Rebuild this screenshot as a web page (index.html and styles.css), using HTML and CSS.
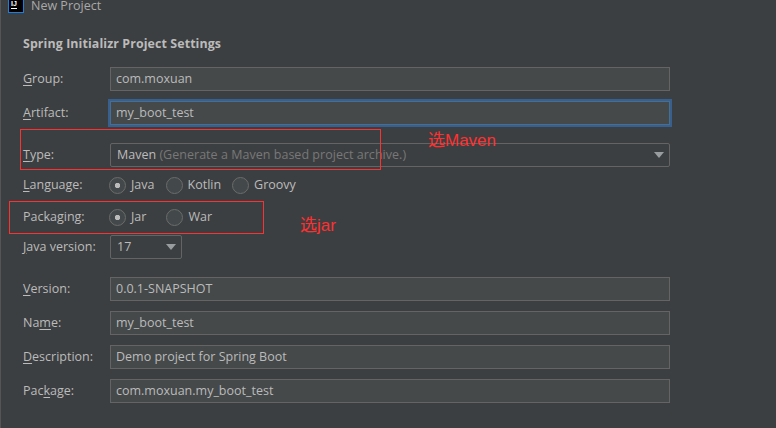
FILE: index.html
```html
<!DOCTYPE html>
<html lang="en">
<head>
<meta charset="utf-8">
<title>New Project</title>
<link rel="stylesheet" href="styles.css">
</head>
<body>
<div class="window">
  <header class="titlebar">
    <span class="logo"><span class="logo-text">IJ</span><span class="logo-bar"></span></span>
    <span class="title">New Project</span>
  </header>
  <h1 class="heading">Spring Initializr Project Settings</h1>
  <form class="form">
    <div class="row"><span class="label"><u>G</u>roup:</span><div class="field">com.moxuan</div></div>
    <div class="row"><span class="label"><u>A</u>rtifact:</span><div class="field focused">my_boot_test</div></div>
    <div class="row row-gap"><span class="label"><u>T</u>ype:</span>
      <div class="field select"><span class="select-text">Maven <span class="hint">(Generate a Maven based project archive.)</span></span><span class="arrow"></span></div>
    </div>
    <div class="row radio-row"><span class="label"><u>L</u>anguage:</span>
      <div class="radios">
        <span class="radio checked lang1">Java</span>
        <span class="radio lang2">Kotlin</span>
        <span class="radio">Groovy</span>
      </div>
    </div>
    <div class="row radio-row pack-row"><span class="label">Packa<u>g</u>ing:</span>
      <div class="radios">
        <span class="radio checked pack1">Jar</span>
        <span class="radio">War</span>
      </div>
    </div>
    <div class="row"><span class="label"><u>J</u>ava version:</span>
      <div class="field select version"><span class="select-text">17</span><span class="arrow"></span></div>
    </div>
    <div class="row row-gap"><span class="label"><u>V</u>ersion:</span><div class="field">0.0.1-SNAPSHOT</div></div>
    <div class="row"><span class="label">Na<u>m</u>e:</span><div class="field">my_boot_test</div></div>
    <div class="row"><span class="label"><u>D</u>escription:</span><div class="field">Demo project for Spring Boot</div></div>
    <div class="row"><span class="label">Pac<u>k</u>age:</span><div class="field">com.moxuan.my_boot_test</div></div>
  </form>
  <div class="mark mark-type"></div>
  <div class="mark mark-pack"></div>
  <span class="note note-maven">选Maven</span>
  <span class="note note-jar">选jar</span>
</div>
</body>
</html>
```
FILE: styles.css
```css
* { box-sizing: border-box; }
html, body { margin: 0; padding: 0; }
body { width: 776px; height: 428px; overflow: hidden; background: #3c3f41; }
.window {
  position: relative;
  width: 776px;
  height: 428px;
  background: #3c3f41;
  border-left: 1px solid #555;
  font-family: "Open Sans", "Noto Sans", sans-serif;
  font-size: 12.5px;
  color: #bbbbbb;
}
.titlebar { display: flex; align-items: flex-start; height: 13px; padding-left: 7px; gap: 7px; }
.logo {
  position: relative;
  display: block;
  width: 16px;
  height: 13px;
  background: #000;
  border: 1px solid #1a7fe0;
  border-top: 0;
  overflow: hidden;
}
.logo-text { position: absolute; left: 2px; top: 0; font: bold 7px/7px "Liberation Sans", sans-serif; color: #fff; }
.logo-bar { position: absolute; left: 2px; top: 8px; width: 6px; height: 1px; background: #fff; }
.title { font-size: 12.5px; line-height: 11px; color: #a9a9a9; }
.heading { margin: 23px 0 0 22px; font-size: 12.4px; line-height: 16px; font-weight: 700; color: #bbbbbb; letter-spacing: 0.1px; }
.form { display: flex; flex-direction: column; gap: 10px; margin: 15px 0 0 22px; }
.row { display: flex; align-items: center; height: 24px; }
.row-gap { margin-top: 8px; }
.radio-row { height: 16px; }
.pack-row { margin-top: 6px; }
.label { width: 87px; flex: none; position: relative; top: -1px; }
.label u { text-underline-offset: 2px; }
.field {
  width: 560px;
  height: 24px;
  padding: 0 5px;
  display: flex;
  align-items: center;
  background: #45494a;
  border: 1px solid #646464;
  line-height: 22px;
  white-space: nowrap;
}
.focused { outline: 2px solid #38608f; border-color: #466d94; }
.select { background: #3c3f41; border-radius: 2px; justify-content: space-between; padding: 0 5px 0 6px; }
.version { width: 72px; padding-right: 5px; }
.hint { color: #787878; letter-spacing: 0.03px; }
.arrow { width: 0; height: 0; border-left: 5px solid transparent; border-right: 5px solid transparent; border-top: 6px solid #9a9da0; }
.radios { display: flex; gap: 10px; margin-left: -1px; }
.radio { display: flex; align-items: center; gap: 5px; line-height: 16px; }
.radio::before {
  content: "";
  width: 15px;
  height: 15px;
  border-radius: 50%;
  border: 1px solid #6b6b6b;
  background: #43494a;
  flex: none;
}
.radio.checked::before { background: radial-gradient(circle, #bbbbbb 0 2.4px, #43494a 3px); }
.lang1 { margin-right: 1px; }
.lang2 { margin-right: 1px; }
.pack1 { margin-right: 10px; }
.mark { position: absolute; border: 1px solid #ff3030; }
.mark-type { left: 19px; top: 129px; width: 361px; height: 41px; }
.mark-pack { left: 8px; top: 201px; width: 255px; height: 33px; }
.note { position: absolute; font-family: "Liberation Sans", "Noto Sans CJK SC", sans-serif; font-size: 17px; line-height: 20px; color: #ff3030; white-space: nowrap; }
.note-maven { left: 427px; top: 131px; }
.note-jar { left: 299px; top: 216px; }
```
